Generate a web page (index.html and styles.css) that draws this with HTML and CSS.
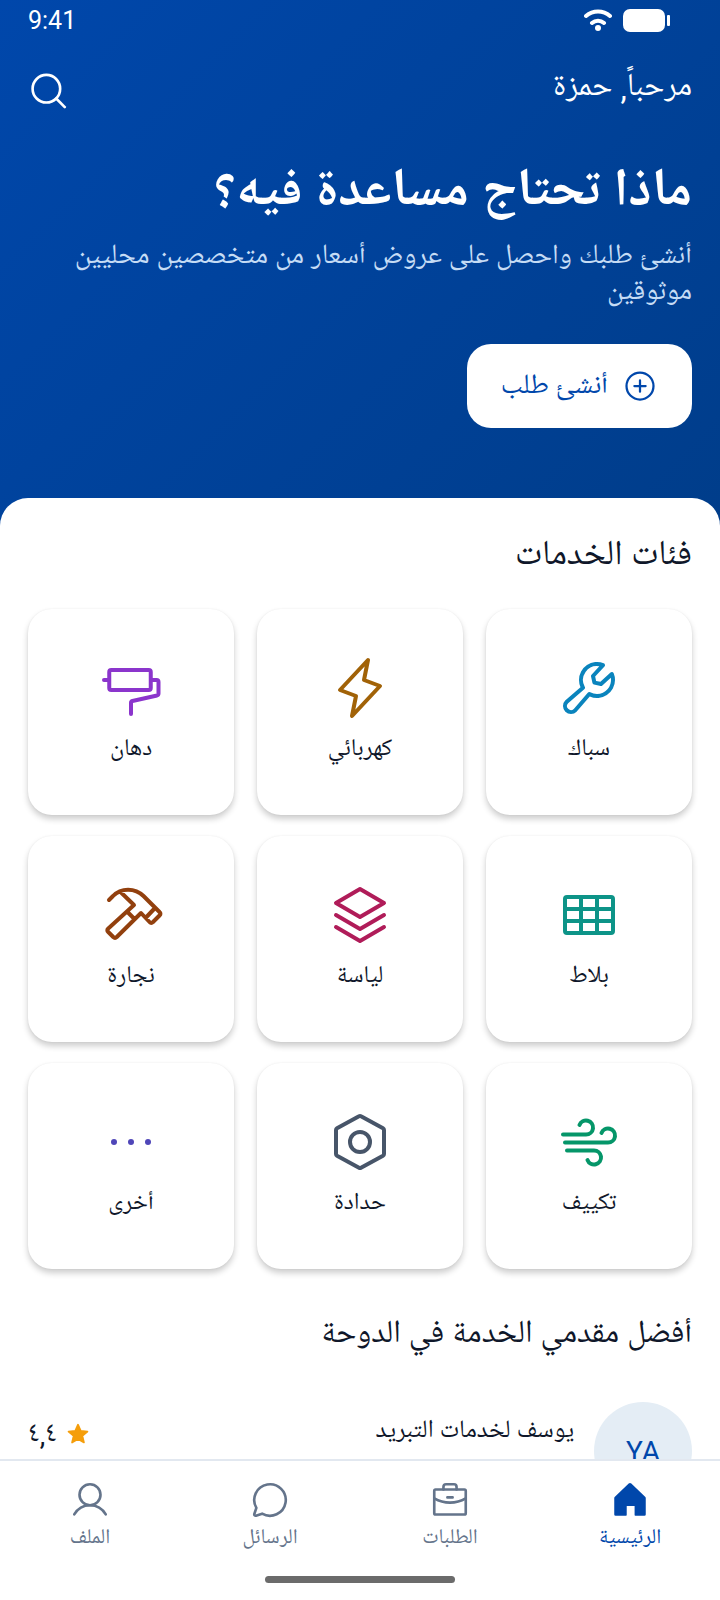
FILE: index.html
```
<!DOCTYPE html>
<html lang="ar" dir="rtl">

    <head>
        <meta charset="utf-8">
        <meta name="viewport" content="width=device-width, initial-scale=1">
        <title>الرئيسية</title>
        <link rel="stylesheet" href="styles.css">
    </head>

    <body>
        <main class="page">
            <header class="hero">
                <div class="status" dir="ltr">
                    <span>9:41</span>
                    <div class="status-icons">
                        <svg width="28" height="22" viewBox="0 0 28 22" fill="none" stroke="#fff" stroke-width="4" stroke-linecap="round">
                            <path d="M2 7a18 18 0 0 1 24 0M8 14a9 9 0 0 1 12 0" />
                            <circle cx="14" cy="19" r="3" fill="#fff" stroke="none" />
                        </svg>
                        <svg width="47" height="24" viewBox="0 0 47 24" fill="#fff">
                            <rect x="0" y="1" width="42" height="23" rx="7" />
                            <rect x="44" y="7" width="3" height="11" rx="1" />
                        </svg>
                    </div>
                </div>
                <div class="topbar">
                    <p>مرحباً, حمزة</p>
                    <button class="search" aria-label="بحث">
                        <svg class="icon" viewBox="0 0 256 256">
                            <circle cx="112" cy="114" r="84" />
                            <path d="M172 174l52 52" />
                        </svg>
                    </button>
                </div>
                <h1>ماذا تحتاج مساعدة فيه؟</h1>
                <p class="lead">أنشئ طلبك واحصل على عروض أسعار من متخصصين محليين موثوقين</p>
                <button class="create">
                    <svg class="icon" viewBox="0 0 256 256">
                        <circle cx="128" cy="128" r="96" />
                        <path d="M88 128h80M128 88v80" />
                    </svg>
                    أنشئ طلب
                </button>
            </header>

            <div class="sheet">
                <section>
                    <h2>فئات الخدمات</h2>
                    <div class="categories">
                        <a href="#" class="card blue">
                            <svg class="icon" viewBox="0 0 256 256">
                                <path class="solid" d="M226.76,69a8,8,0,0,0-12.84-2.88l-40.3,37.19-17.23-3.7-3.7-17.23,37.19-40.3A8,8,0,0,0,187,29.24,72,72,0,0,0,88,96,72.34,72.34,0,0,0,94,124.94L33.79,177c-.15.12-.29.26-.43.39a32,32,0,0,0,45.26,45.26c.13-.13.27-.28.39-.42L131.06,162A72,72,0,0,0,232,96,71.56,71.56,0,0,0,226.76,69ZM160,152a56.14,56.14,0,0,1-27.07-7,8,8,0,0,0-9.92,1.77L67.11,211.51a16,16,0,0,1-22.62-22.62L109.18,133a8,8,0,0,0,1.77-9.93,56,56,0,0,1,58.36-82.31l-31.2,33.81a8,8,0,0,0-1.94,7.1L141.83,108a8,8,0,0,0,6.14,6.14l26.35,5.66a8,8,0,0,0,7.1-1.94l33.81-31.2A56.06,56.06,0,0,1,160,152Z" />
                            </svg>
                            <span>سباك</span>
                        </a>
                        <a href="#" class="card amber">
                            <svg class="icon" viewBox="0 0 256 256">
                                <path d="M160 16l-16 80 64 24L96 240l16-80-64-24Z" />
                            </svg>
                            <span>كهربائي</span>
                        </a>
                        <a href="#" class="card purple">
                            <svg class="icon" viewBox="0 0 256 256">
                                <rect x="41" y="56" width="166" height="80" rx="8" />
                                <path d="M20 96h20M208 96h22a8 8 0 0 1 8 8v46a8 8 0 0 1-5.8 7.7L133.8 180A8 8 0 0 0 128 188v44" />
                            </svg>
                            <span>دهان</span>
                        </a>
                        <a href="#" class="card teal">
                            <svg class="icon" viewBox="0 0 256 256">
                                <rect x="32" y="56" width="192" height="144" rx="8" />
                                <path d="M96 56v144M160 56v144M32 104h192M32 152h192" />
                            </svg>
                            <span>بلاط</span>
                        </a>
                        <a href="#" class="card pink">
                            <svg class="icon" viewBox="0 0 256 256">
                                <path d="M32 80l96 56 96-56-96-56ZM32 128l96 56 96-56M32 176l96 56 96-56" />
                            </svg>
                            <span>لياسة</span>
                        </a>
                        <a href="#" class="card brown">
                            <svg class="icon" viewBox="0 0 256 256">
                                <path d="M40 68l16-16C88 18 144 18 178 52L243 117a8 8 0 0 1 0 12L215 157a8 8 0 0 1-12 0L168 120 70 217a8 8 0 0 1-12 0L36 195a8 8 0 0 1 0-12L140 88 84 34M224 100l-36 38M112 114l30 30" />
                            </svg>
                            <span>نجارة</span>
                        </a>
                        <a href="#" class="card green">
                            <svg class="icon" viewBox="0 0 256 256">
                                <path d="M24 98h92a28 28 0 1 0-26-38M32 130h172a28 28 0 1 0-26-38M40 162h108a28 28 0 1 1-26 38" />
                            </svg>
                            <span>تكييف</span>
                        </a>
                        <a href="#" class="card slate">
                            <svg class="icon" viewBox="0 0 256 256">
                                <path d="M32 80a8 8 0 0 1 4-7l88-48a8 8 0 0 1 8 0l88 48a8 8 0 0 1 4 7v96a8 8 0 0 1-4 7l-88 48a8 8 0 0 1-8 0l-88-48a8 8 0 0 1-4-7Z" />
                                <circle cx="128" cy="128" r="40" />
                            </svg>
                            <span>حدادة</span>
                        </a>
                        <a href="#" class="card indigo">
                            <svg class="icon" viewBox="0 0 256 256">
                                <g class="solid">
                                    <circle cx="60" cy="128" r="12" />
                                    <circle cx="128" cy="128" r="12" />
                                    <circle cx="196" cy="128" r="12" />
                                </g>
                            </svg>
                            <span>أخرى</span>
                        </a>
                    </div>
                </section>

                <section class="providers">
                    <h2>أفضل مقدمي الخدمة في الدوحة</h2>
                    <article class="provider">
                        <div class="avatar">YA</div>
                        <div class="info">
                            <h3>يوسف لخدمات التبريد</h3>
                            <p>تكييف وتبريد</p>
                        </div>
                        <div class="rating">
                            <svg width="22" height="22" viewBox="0 0 256 256">
                                <path fill="#f59e0b" stroke="#f59e0b" stroke-width="20" stroke-linejoin="round" d="M128 20l32 72 78 7-59 51 18 77-69-41-69 41 18-77-59-51 78-7Z" />
                            </svg>
                            <span>٤,٤</span>
                        </div>
                    </article>
                </section>
            </div>
        </main>

        <nav class="tabs">
            <div class="tab-list">
                <a href="#" class="tab active">
                    <svg class="icon" viewBox="0 0 256 256">
                        <path class="solid" d="M224 116v100a8 8 0 0 1-8 8h-56a4 4 0 0 1-4-4v-56h-48v56a4 4 0 0 1-4 4H40a8 8 0 0 1-8-8V116a12 12 0 0 1 4-8l84-80a12 12 0 0 1 16 0l84 80a12 12 0 0 1 4 8Z" />
                    </svg>
                    <span>الرئيسية</span>
                </a>
                <a href="#" class="tab">
                    <svg class="icon" viewBox="0 0 256 256">
                        <rect x="32" y="64" width="192" height="152" rx="8" />
                        <path d="M168 64V48a16 16 0 0 0-16-16h-48a16 16 0 0 0-16 16v16M224 118a191 191 0 0 1-96 26 191 191 0 0 1-96-26M112 112h32" />
                    </svg>
                    <span>الطلبات</span>
                </a>
                <a href="#" class="tab">
                    <svg class="icon" viewBox="0 0 256 256">
                        <path d="M79.93,211.11a96,96,0,1,0-35-35h0L32.42,213.46a8,8,0,0,0,10.12,10.12l37.39-12.47Z" />
                    </svg>
                    <span>الرسائل</span>
                </a>
                <a href="#" class="tab">
                    <svg class="icon" viewBox="0 0 256 256">
                        <circle cx="128" cy="96" r="64" />
                        <path d="M32 216c19.4-33.5 54.5-56 96-56s76.6 22.5 96 56" />
                    </svg>
                    <span>الملف</span>
                </a>
            </div>
            <div class="home-bar"></div>
        </nav>
    </body>

</html>
```
FILE: styles.css
```
* {
    box-sizing: border-box;
    margin: 0;
}

body {
    display: flex;
    flex-direction: column;
    height: 100vh;
    background-color: white;
    color: #0f172a;
    font-family: Roboto, "Noto Naskh Arabic UI", "Noto Naskh Arabic", "Noto Sans Arabic", "Noto Sans", sans-serif;
}

h1, h2, h3 {
    font-weight: 400;
}

a {
    color: inherit;
    text-decoration: none;
}

button {
    border: none;
    font-family: inherit;
    cursor: pointer;
}

.icon {
    display: block;
    width: 42px;
    height: 42px;
    fill: none;
    stroke: currentColor;
    stroke-width: 16;
    stroke-linecap: round;
    stroke-linejoin: round;
}

.icon .solid {
    fill: currentColor;
    stroke: none;
}

.page {
    flex: 1;
    min-height: 0;
    overflow: hidden;
}

.hero {
    padding: 0 28px 98px;
    background: linear-gradient(135deg, #0047ab, #003d8a);
    color: white;
}

.status {
    display: flex;
    justify-content: space-between;
    align-items: center;
    height: 40px;
    font-size: 25px;
}

.status-icons {
    display: flex;
    align-items: center;
    gap: 11px;
    padding-right: 22px;
}

.topbar {
    display: flex;
    justify-content: space-between;
    align-items: flex-start;
    margin-top: 30px;
    height: 42px;
    font-size: 32px;
    line-height: 36px;
}

.search {
    padding: 0;
    background: none;
    color: white;
}

.hero h1 {
    margin-top: 52px;
    font-size: 53px;
    font-weight: 700;
    line-height: 60px;
}

.lead {
    margin-top: 16px;
    font-size: 28px;
    line-height: 36px;
    color: #c5dcf5;
}

.create {
    display: flex;
    align-items: center;
    gap: 14px;
    height: 84px;
    margin-top: 32px;
    padding: 0 34px;
    border-radius: 24px;
    background-color: white;
    color: #0047ab;
    font-size: 28px;
}

.create .icon {
    width: 36px;
    height: 36px;
}

.sheet {
    margin-top: -28px;
    padding: 40px 28px 36px;
    border-radius: 28px 28px 0 0;
    background-color: white;
}

.sheet h2 {
    font-size: 35px;
    line-height: 40px;
}

.categories {
    display: grid;
    grid-template-columns: repeat(3, 1fr);
    gap: 21px 23px;
    margin-top: 31px;
}

.card {
    display: flex;
    flex-direction: column;
    align-items: center;
    justify-content: center;
    gap: 12px;
    aspect-ratio: 1;
    border-radius: 24px;
    background-color: white;
    box-shadow: 0 4px 6px rgba(0, 0, 0, .2), 0 0 2px rgba(0, 0, 0, .06);
}

.card .icon {
    width: 64px;
    height: 64px;
}

.card span {
    color: #0f172a;
    font-size: 24px;
    line-height: 36px;
}

.blue { color: #0a84bd; }
.amber { color: #a16207; }
.purple { color: #8b35cc; }
.teal { color: #0d9488; }
.pink { color: #b01c59; }
.brown { color: #92400e; }
.green { color: #059669; }
.slate { color: #475569; }
.indigo { color: #4f46b8; }

.providers {
    margin-top: 46px;
}

.providers h2 {
    font-size: 32px;
}

.provider {
    display: flex;
    gap: 20px;
    margin-top: 47px;
}

.avatar {
    display: grid;
    place-items: center;
    width: 98px;
    height: 98px;
    border-radius: 50%;
    background-color: #e4edf5;
    color: #0047ab;
    font-size: 28px;
}

.info {
    flex: 1;
    padding-top: 12px;
}

.info h3 {
    font-size: 25px;
    line-height: 36px;
}

.info p {
    margin-top: 4px;
    font-size: 20px;
    line-height: 36px;
    color: #64748b;
}

.rating {
    display: flex;
    align-items: center;
    gap: 10px;
    height: 36px;
    margin-top: 14px;
    font-size: 28px;
}

.tabs {
    border-top: 2px solid #e2e8f0;
    padding: 18px 0 17px;
    background-color: white;
}

.tab-list {
    display: flex;
}

.tab {
    display: flex;
    flex: 1;
    flex-direction: column;
    align-items: center;
    gap: 2px;
    color: #64748b;
    font-size: 21px;
    line-height: 32px;
}

.active {
    color: #0047ab;
}

.home-bar {
    width: 190px;
    height: 7px;
    margin: 21px auto 0;
    border-radius: 4px;
    background-color: #6b6b6b;
}
```
